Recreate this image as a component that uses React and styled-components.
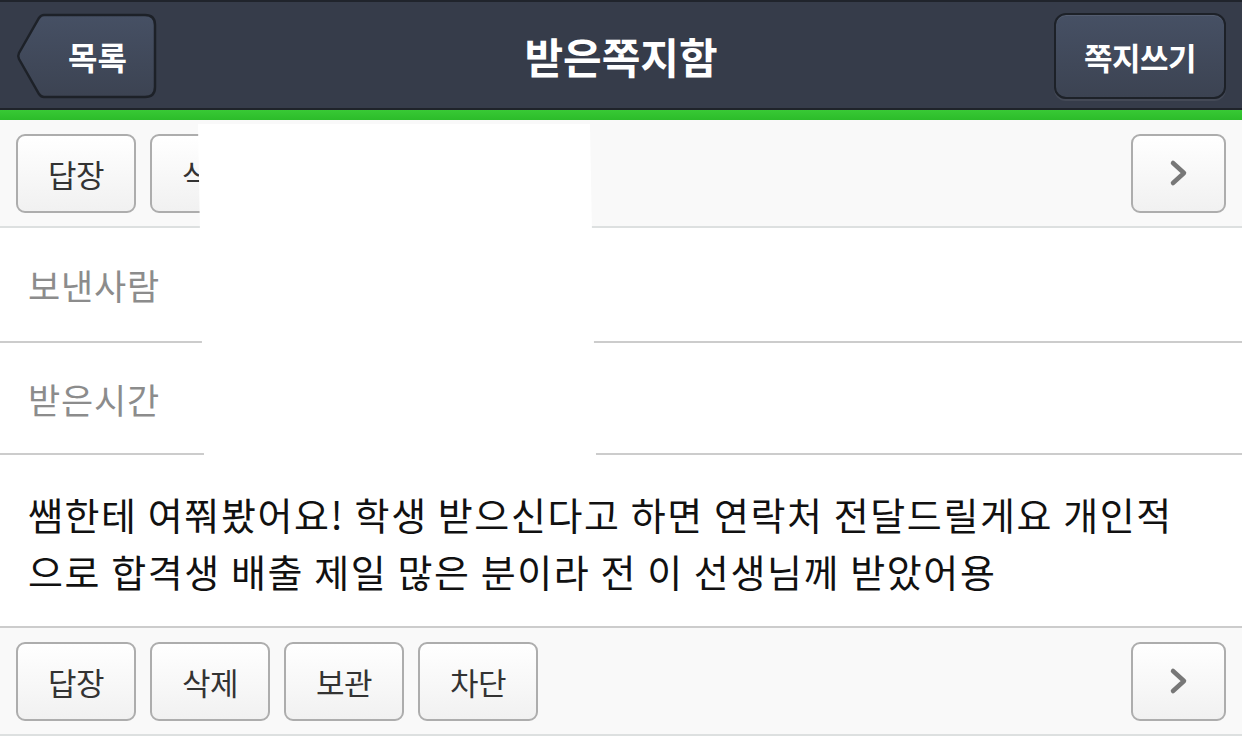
import React from 'react'
import styled, { createGlobalStyle } from 'styled-components'

const GlobalStyle = createGlobalStyle`
  html, body {
    margin: 0;
    padding: 0;
    background: #ffffff;
  }
  body {
    font-family: "Noto Sans CJK KR", "Noto Sans", sans-serif;
  }
`

const Page = styled.div`
  position: relative;
  width: 1242px;
  min-height: 742px;
  background: #ffffff;
  overflow: hidden;
`

const Header = styled.header`
  display: grid;
  grid-template-columns: 1fr auto 1fr;
  align-items: center;
  align-content: start;
  box-sizing: border-box;
  height: 110px;
  padding: 11px 16px 0 16px;
  background: #363c4a;
  border-top: 2px solid #20242c;
  border-bottom: 2px solid #1f232a;
`

const Title = styled.h1`
  margin: 0;
  color: #ffffff;
  font-size: 42px;
  font-weight: 700;
  letter-spacing: 0;
  line-height: 86px;
`

const BackButton = styled.button`
  position: relative;
  justify-self: start;
  width: 141px;
  height: 86px;
  padding: 0 0 0 22px;
  border: 0;
  background: transparent;
  color: #ffffff;
  font-family: inherit;
  font-size: 32px;
  font-weight: 700;
  cursor: pointer;

  > svg {
    position: absolute;
    inset: 0;
  }

  > span {
    position: relative;
  }
`

const WriteButton = styled.button`
  justify-self: end;
  box-sizing: border-box;
  width: 172px;
  height: 86px;
  border: 2px solid #1d2128;
  border-radius: 12px;
  background: linear-gradient(#465064, #3c4352);
  box-shadow: 0 2px 0 rgba(255, 255, 255, 0.07), inset 0 1px 0 rgba(255, 255, 255, 0.08);
  color: #ffffff;
  font-family: inherit;
  font-size: 31px;
  font-weight: 700;
  letter-spacing: -0.5px;
`

const GreenBar = styled.div`
  height: 10px;
  background: linear-gradient(#38c935, #2cbc2a);
`

const Toolbar = styled.div`
  display: flex;
  gap: 14px;
  align-items: center;
  height: 106px;
  padding: 0 16px;
  background: #f9f9f9;
  border-top: ${props => props.$top ? '2px solid #cccccc' : '0'};
  border-bottom: 2px solid #dde0e0;
`

const ToolButton = styled.button`
  box-sizing: border-box;
  width: 120px;
  height: 79px;
  border: 2px solid #adadad;
  border-radius: 9px;
  background: linear-gradient(#ffffff, #f1f1f1);
  color: #333333;
  font-family: inherit;
  font-size: 31px;
  letter-spacing: -0.5px;
  padding: 0;
`

const NextButton = styled(ToolButton)`
  width: 95px;
  margin-left: auto;
  display: flex;
  align-items: center;
  justify-content: center;
`

const InfoRow = styled.div`
  display: flex;
  align-items: center;
  height: ${props => props.$h}px;
  padding: 0 28px;
  border-bottom: 2px solid #cccccc;
  color: #8c8c8c;
  font-size: 35px;
  letter-spacing: 0.8px;
`

const Message = styled.p`
  margin: 0;
  padding: 30px 60px 27px 28px;
  color: #111111;
  font-size: 38px;
  line-height: 57px;
  letter-spacing: 1.6px;
`

const Redaction = styled.div`
  position: absolute;
  left: 0;
  top: 0;
  width: 1242px;
  height: 742px;
  background: #ffffff;
  pointer-events: none;
  clip-path: polygon(198px 124px, 590px 124px, 596px 455px, 204px 455px);
`

const Chevron = () =>
  <svg width="22" height="30" viewBox="0 0 22 30">
    <path d="M5 5 L16 15 L5 25" fill="none" stroke="#777777" strokeWidth="4.5" strokeLinecap="round" strokeLinejoin="round" />
  </svg>

const BackShape = () =>
  <svg width="141" height="86" viewBox="0 0 141 86">
    <defs>
      <linearGradient id="backFill" x1="0" y1="0" x2="0" y2="1">
        <stop offset="0" stopColor="#465064" />
        <stop offset="1" stopColor="#3c4352" />
      </linearGradient>
    </defs>
    <path d="M28 2 H129 Q139 2 139 12 V74 Q139 84 129 84 H28 Q25 84 23 81 L3 46 Q1.5 43 3 40 L23 5 Q25 2 28 2 Z"
      fill="url(#backFill)" stroke="#1d2128" strokeWidth="2.5" />
  </svg>

const Actions = ({ top }) =>
  <Toolbar $top={top}>
    <ToolButton>답장</ToolButton>
    <ToolButton>삭제</ToolButton>
    <ToolButton>보관</ToolButton>
    <ToolButton>차단</ToolButton>
    <NextButton><Chevron /></NextButton>
  </Toolbar>

const App = () =>
  <Page>
    <GlobalStyle />
    <Header>
      <BackButton>
        <BackShape />
        <span>목록</span>
      </BackButton>
      <Title>받은쪽지함</Title>
      <WriteButton>쪽지쓰기</WriteButton>
    </Header>
    <GreenBar />
    <Actions />
    <InfoRow $h={113}>보낸사람</InfoRow>
    <InfoRow $h={110}>받은시간</InfoRow>
    <Message>
      쌤한테 여쭤봤어요! 학생 받으신다고 하면 연락처 전달드릴게요 개인적으로 합격생 배출 제일 많은 분이라 전 이 선생님께 받았어용
    </Message>
    <Actions top />
    <Redaction />
  </Page>

export default App
